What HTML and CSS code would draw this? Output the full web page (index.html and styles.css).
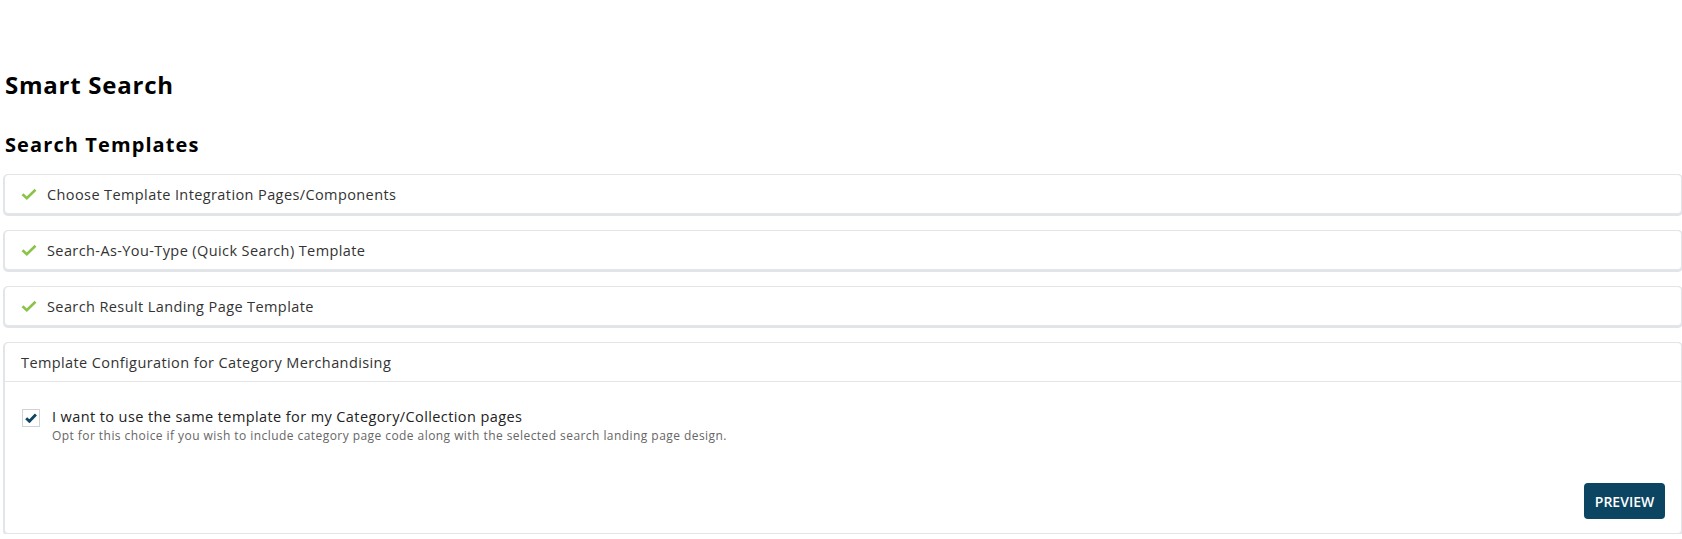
FILE: index.html
```html
<!DOCTYPE html>
<html lang="en">
<head>
    <meta charset="UTF-8">
    <meta name="viewport" content="width=device-width, initial-scale=1.0">
    <title>Smart Search</title>
    <link rel="stylesheet" href="styles.css">
</head>
<body>
    <main class="page">
        <h1 class="page-title">Smart Search</h1>
        <h2 class="section-title">Search Templates</h2>

        <div class="accordion">
            <div class="acc-item">
                <div class="acc-head">
                    <svg class="tick" viewBox="0 0 16 12" width="16" height="12"><path d="M1.5 6.2 5.8 10.2 14.5 1.8" fill="none" stroke="#8bc34a" stroke-width="2.6"/></svg>
                    <span>Choose Template Integration Pages/Components</span>
                </div>
            </div>

            <div class="acc-item">
                <div class="acc-head">
                    <svg class="tick" viewBox="0 0 16 12" width="16" height="12"><path d="M1.5 6.2 5.8 10.2 14.5 1.8" fill="none" stroke="#8bc34a" stroke-width="2.6"/></svg>
                    <span>Search-As-You-Type (Quick Search) Template</span>
                </div>
            </div>

            <div class="acc-item">
                <div class="acc-head">
                    <svg class="tick" viewBox="0 0 16 12" width="16" height="12"><path d="M1.5 6.2 5.8 10.2 14.5 1.8" fill="none" stroke="#8bc34a" stroke-width="2.6"/></svg>
                    <span>Search Result Landing Page Template</span>
                </div>
            </div>

            <div class="acc-item open">
                <div class="acc-head">Template Configuration for Category Merchandising</div>
                <div class="acc-body">
                    <label class="option">
                        <span class="checkbox">
                            <svg viewBox="0 0 12 10" width="12" height="10"><path d="M1.2 5.2 4.4 8.3 10.9 1.5" fill="none" stroke="#0d4562" stroke-width="2.8"/></svg>
                        </span>
                        <span class="option-text">
                            <span class="option-title">I want to use the same template for my Category/Collection pages</span>
                            <span class="option-hint">Opt for this choice if you wish to include category page code along with the selected search landing page design.</span>
                        </span>
                    </label>
                    <div class="acc-actions">
                        <button class="btn-primary" type="button">Preview</button>
                    </div>
                </div>
            </div>
        </div>
    </main>
</body>
</html>
```

FILE: styles.css
```css
body {
    margin: 0;
    font-family: "Open Sans", "Liberation Sans", sans-serif;
    color: #333;
    background: #fff;
}
.page { padding: 68px 0 0 4px; }

.page-title {
    margin: 0 0 0 1px;
    font-size: 24px;
    line-height: 34px;
    font-weight: 700;
    letter-spacing: 0.75px;
    color: #000;
}
.section-title {
    margin: 29px 0 15px 1px;
    font-size: 20px;
    line-height: 28px;
    font-weight: 700;
    letter-spacing: 1.1px;
    color: #000;
}

.accordion { display: flex; flex-direction: column; gap: 16px; }
.acc-item {
    background: #fff;
    border: 1px solid #e3e5e8;
    border-radius: 4px;
    box-shadow: 0 1px 0 1px #e1e4e8;
}
.acc-head {
    display: flex;
    align-items: center;
    gap: 10px;
    height: 38px;
    padding: 0 16px;
    font-size: 14.5px;
    letter-spacing: 0.4px;
    color: #333;
}
.tick { flex: none; }
.open .acc-head { border-bottom: 1px solid #e3e5e8; }

.acc-body { padding: 25px 16px 14px 17px; }
.option { display: flex; gap: 12px; cursor: pointer; }
.checkbox {
    flex: none;
    width: 16px;
    height: 16px;
    margin-top: 2px;
    border: 1px solid #cfd3d8;
    display: flex;
    align-items: center;
    justify-content: center;
}
.option-text { display: flex; flex-direction: column; }
.option-title { font-size: 14.5px; line-height: 20px; letter-spacing: 0.4px; color: #222; }
.option-hint { font-size: 12px; line-height: 18px; letter-spacing: 0.44px; color: #666; }

.acc-actions { display: flex; justify-content: flex-end; margin-top: 38px; }
.btn-primary {
    width: 81px;
    height: 36px;
    border: 0;
    border-radius: 4px;
    background: #0c4561;
    color: #fff;
    font-family: "Open Sans", sans-serif;
    font-size: 14px;
    font-weight: 600;
    text-transform: uppercase;
    cursor: pointer;
}
```
